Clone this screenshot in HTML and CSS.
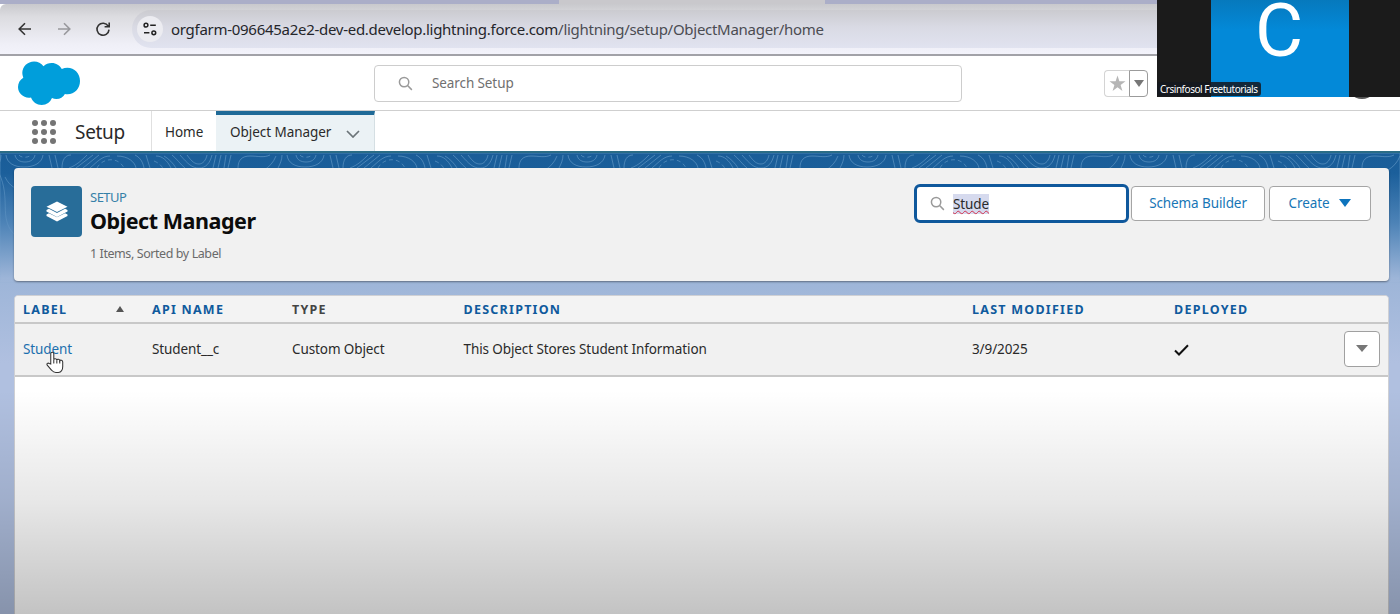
FILE: index.html
```
<!DOCTYPE html>
<html lang="en">
  <head>
    <meta charset="UTF-8" />
    <meta name="viewport" content="width=device-width, initial-scale=1.0" />
    <title>Object Manager | Salesforce</title>
    <link rel="stylesheet" href="styles.css">
  </head>
  <body>
    <!-- browser bar -->
    <div class="tabstrip"><div class="tab-active"></div></div>
    <div class="toolbar">
      <svg class="nav-icon" viewBox="0 0 16 16"><path d="M14 8H2.5M8 2.2 2.2 8 8 13.8" /></svg>
      <svg class="nav-icon off" viewBox="0 0 16 16"><path d="M2 8h11.5M8 2.2 13.8 8 8 13.8" /></svg>
      <svg class="nav-icon" viewBox="0 0 16 16"><path d="M13.2 5.2A6 6 0 1 0 14 8.6M14.2 1.4v4.4H9.6" /></svg>
      <div class="address">
        <span class="site-info">
          <svg viewBox="0 0 14 14"><circle cx="3" cy="3.2" r="1.9" /><path d="M7.2 3.2h5.6M1 10.8h5.4" /><circle cx="10.8" cy="10.8" r="1.9" /></svg>
        </span>
        <span class="url">orgfarm-096645a2e2-dev-ed.develop.lightning.force.com<span>/lightning/setup/ObjectManager/home</span></span>
      </div>
    </div>

    <!-- global header -->
    <header class="header">
      <svg class="logo" viewBox="0 0 64 44">
        <path d="M26.5 5.3A11.6 11.6 0 0 1 34.8 2c4.300 0 8 2.400 10 5.900a13.800 13.800 0 0 1 5.600-1.200C57.500 6.700 63 12.600 63 19.900S57.500 33.300 50.500 33.300c-.9 0-1.800-.1-2.600-.3a9.800 9.800 0 0 1-8.600 5.100c-1.600 0-3-.4-4.300-1A11.200 11.200 0 0 1 24.700 44c-4.900 0-9.100-3.100-10.700-7.500-.7.2-1.400.2-2.200.2C6 36.700 1 31.900 1 26c0-4 2.100-7.400 5.300-9.300A12.300 12.300 0 0 1 5.300 12C5.300 5.500 10.600.5 17.100.5c3.800 0 7.200 1.800 9.400 4.800z" />
      </svg>
      <div class="global-search">
        <svg class="glass" viewBox="0 0 16 16"><circle cx="6.500" cy="6.500" r="5" /><path d="m10.200 10.200 4.600 4.600" /></svg>
        <span>Search Setup</span>
      </div>
      <div class="favorites">
        <span class="star"><svg viewBox="0 0 18 18"><path d="m9 .5 2 6.200h6.500l-5.200 3.900 1.900 6.300L9 13.100l-5.200 3.800 1.900-6.300L.5 6.700H7z" /></svg></span>
        <span class="star-menu"><i class="caret"></i></span>
      </div>
      <div class="avatar"></div>
    </header>

    <nav class="context-bar">
      <svg class="waffle" viewBox="0 0 24 24">
        <circle cx="3" cy="3" r="3" /><circle cx="12" cy="3" r="3" /><circle cx="21" cy="3" r="3" />
        <circle cx="3" cy="12" r="3" /><circle cx="12" cy="12" r="3" /><circle cx="21" cy="12" r="3" />
        <circle cx="3" cy="21" r="3" /><circle cx="12" cy="21" r="3" /><circle cx="21" cy="21" r="3" />
      </svg>
      <span class="app-name">Setup</span>
      <a class="tab home">Home</a>
      <a class="tab active">
        Object Manager
        <svg viewBox="0 0 14 8"><path d="m1 1 6 6 6-6" /></svg>
      </a>
    </nav>

    <main class="page">
      <svg class="topo" width="1400" height="130">
        <defs>
          <pattern id="topo" width="281" height="130" patternUnits="userSpaceOnUse" x="-127">
            <path d="M2 3c6 0 11 4 15 12M10 3c5 3 9 7 12 12M18 2c5 4 8 9 13 13M26 2c8 9 12 13 19 13s11-5 13-13M33 2c5 7 8 9 12 9s7-4 8-9M62 2l-3 13M67 2l-3 13M72 2l-2 13M77 2l-3 13M84 15c0-8 4-12 12-12s14 2 20-1M90 22c14 0 27-6 32-19M124 15c2-4 4-8 4-13M133 2c1 8 8 12 18 12s18-4 19-12M142 2c1 5 5 7 10 7s9-2 10-7M176 2l3 13M182 2l3 13M189 15c0-8 3-13 9-13M196 15c8-3 13-8 18-13M203 15l17-13M210 15l16-13M217 15c7-6 12-12 20-12M244 3c11 0 18 6 19 12M262 2c6 3 8 8 9 13M273 2l4 13" />
            <path stroke-dasharray="4 3" d="M146 2c2 3 9 3 12 0M224 15c5-10 21-12 27 0M0 8c5 2 8 5 9 8" />
            <path d="M126 20c12 26 0 44 14 60s30-4 28 22M132 24c10 20 24 6 20 24s14 22 8 40M253 20c-18 16 4 26-8 44s-20 22-8 44M264 34c10-8 22 4 12 14s-20-6-12-14" />
          </pattern>
          <linearGradient id="fade" x2="0" y2="1"><stop offset="0" stop-color="#fff" /><stop offset="1" stop-color="#fff" stop-opacity="0" /></linearGradient>
          <mask id="m"><rect width="1400" height="130" fill="url(#fade)" /></mask>
        </defs>
        <rect width="1400" height="130" fill="url(#topo)" mask="url(#m)" />
      </svg>

      <section class="card page-header">
        <div class="page-icon">
          <svg viewBox="0 0 22 22"><path d="M11 .5 21.500 5.700 11 11 .5 5.700zM.5 9l2.400-1.200L11 11.900l8.100-4.100L21.500 9v1.600L11 15.900.5 10.600zM.5 13.400l2.400-1.200L11 16.300l8.100-4.100 2.400 1.200v1.500L11 20.500.5 14.900z" /></svg>
        </div>
        <div class="titles">
          <div class="eyebrow">SETUP</div>
          <h1>Object Manager</h1>
          <p>1 Items, Sorted by Label</p>
        </div>
        <div class="actions">
          <div class="quick-find">
            <svg class="glass" viewBox="0 0 16 16"><circle cx="6.500" cy="6.500" r="5" /><path d="m10.200 10.200 4.600 4.600" /></svg>
            <span>Stude</span>
          </div>
          <a class="btn schema">Schema Builder</a>
          <a class="btn create">Create <i class="caret"></i></a>
        </div>
      </section>

      <section class="card list">
        <div class="row head">
          <span class="sorted">LABEL <i class="up"></i></span>
          <span>API NAME</span>
          <span class="plain">TYPE</span>
          <span>DESCRIPTION</span>
          <span>LAST MODIFIED</span>
          <span>DEPLOYED</span>
        </div>
        <div class="row">
          <a class="link">Student
            <svg class="cursor" viewBox="0 0 20 24"><path d="M5 13.500V2.800C5 .6 8.200.6 8.200 2.800v6.400c0-1.500 3-1.500 3.200.3.300-1.300 2.900-1.100 3.100.7.500-1.100 3.100-.9 3.100 1.400v4.600c0 3.700-2 6-4.600 6.300h-2.600c-2 0-3.200-.8-4.400-2.300L1.300 14.800c-1-1.600.8-2.700 2.100-1.800z" /><path d="M8.200 9v4M11.400 9.500V13M14.500 10.200V13" /></svg>
          </a>
          <span class="api">Student__c</span>
          <span>Custom Object</span>
          <span>This Object Stores Student Information</span>
          <span>3/9/2025</span>
          <span><svg class="check" viewBox="0 0 15 12"><path d="m1 6.500 4 4L14 1.200" /></svg></span>
          <span class="row-menu"><i class="caret"></i></span>
        </div>
        <div class="watermark">CRS Info Solutions</div>
      </section>
    </main>

    <!-- meeting thumbnail -->
    <aside class="call">
      <div class="face">C</div>
      <div class="name">Crsinfosol Freetutorials</div>
    </aside>
    <div class="shade"></div>
  </body>
</html>
```
FILE: styles.css
```
* {
  box-sizing: border-box;
}
body {
  margin: 0;
  height: 614px;
  overflow: hidden;
  position: relative;
  display: flex;
  flex-direction: column;
  font-family: "Noto Sans", "Open Sans", sans-serif;
  font-size: 13.5px;
  letter-spacing: -0.1px;
  color: #2a2a2a;
  background-color: white;
}
svg {
  display: block;
  fill: none;
}
.tabstrip,
.toolbar,
.header,
.context-bar {
  flex-shrink: 0;
}
.tabstrip {
  height: 4px;
  background-color: #abaec8;
}
.tab-active {
  width: 266px;
  height: 4px;
  margin-left: 559px;
  background-color: #c9c8cc;
}
.toolbar {
  height: 52px;
  display: flex;
  align-items: center;
  padding-left: 17px;
  border-bottom: 2px solid #a2a2a8;
  border-top-left-radius: 6px;
  background: linear-gradient(#c9c9cd, #dcdce0 25%, #efeff7 80%, #f3f3fb);
}
.nav-icon {
  width: 16px;
  height: 16px;
  margin-right: 23px;
  stroke: #333;
  stroke-width: 1.6;
}
.nav-icon.off {
  stroke: #98989c;
}
.address {
  flex: 1;
  height: 38px;
  margin-left: -2px;
  border-radius: 19px 0 0 19px;
  display: flex;
  align-items: center;
  padding-left: 5px;
  background: linear-gradient(#cbcbd0, #d9dae4 45%, #e1e3f0);
}
.site-info {
  width: 26px;
  height: 26px;
  border-radius: 50%;
  background-color: #ececf1;
  display: flex;
  align-items: center;
  justify-content: center;
}
.site-info svg {
  width: 14px;
  height: 14px;
  stroke: #222;
  stroke-width: 1.5;
}
.url {
  margin-left: 8px;
  font-size: 15px;
  letter-spacing: -0.28px;
  color: #25262b;
}
.url span {
  color: #4b4c52;
}

.header {
  height: 55px;
  position: relative;
  display: flex;
  align-items: center;
  border-bottom: 1px solid #cfcfcf;
}
.logo {
  width: 64px;
  height: 44px;
  margin-left: 17px;
  fill: #009edb;
}
.glass {
  width: 15px;
  height: 15px;
  stroke: #9a9a9a;
  stroke-width: 1.6;
}
.global-search {
  width: 588px;
  height: 37px;
  margin-left: 293px;
  padding-left: 23px;
  display: flex;
  align-items: center;
  gap: 19px;
  border: 1px solid #cdcdcd;
  border-radius: 4px;
  color: #707070;
}
.favorites {
  display: flex;
  margin-left: 142px;
  height: 27px;
}
.star,
.star-menu {
  display: flex;
  align-items: center;
  justify-content: center;
  border: 1px solid #d4d4d4;
}
.star {
  width: 25px;
  border-right: 0;
  border-radius: 4px 0 0 4px;
}
.star svg {
  width: 17px;
  height: 17px;
  fill: #b6b6b6;
}
.star-menu {
  width: 19px;
  border-color: #9b9b9b;
  border-radius: 0 4px 4px 0;
}
.caret {
  border: 5px solid transparent;
  border-top: 7px solid #777;
  border-bottom: 0;
}
.avatar {
  position: absolute;
  left: 1346px;
  top: 11px;
  width: 32px;
  height: 32px;
  border-radius: 50%;
  background-color: #555;
}

.context-bar {
  height: 40px;
  display: flex;
  align-items: stretch;
}
.waffle {
  width: 24px;
  height: 24px;
  margin: 9px 0 0 32px;
  fill: #747474;
}
.app-name {
  width: 77px;
  margin-left: 19px;
  font-size: 19px;
  line-height: 42px;
  letter-spacing: -0.3px;
  border-right: 1px solid #e0e0e0;
}
.tab {
  line-height: 42px;
  letter-spacing: -0.05px;
}
.tab.home {
  width: 64px;
  padding-left: 13px;
}
.tab.active {
  width: 159px;
  padding-left: 14px;
  line-height: 33px;
  display: flex;
  align-items: center;
  gap: 15px;
  padding-bottom: 2px;
  border-top: 4px solid #1f6a97;
  border-right: 1px solid #d5dfe3;
  background-color: #ebf2f5;
}
.tab svg {
  width: 14px;
  height: 8px;
  margin-top: 3px;
  stroke: #6b7478;
  stroke-width: 1.7;
}

.page {
  flex: 1;
  min-height: 0;
  position: relative;
  padding: 16px 11px 0 14px;
  border-top: 2px solid #2a6c86;
  background: linear-gradient(#1a5d98, #1b5f9b 20px, #4d83b7 70px, #9db5d8 125px, #b0c0e0 210px);
}
.topo {
  position: absolute;
  left: 0;
  top: 0;
  stroke: #7fb0d8;
  stroke-opacity: 0.5;
}
.card {
  position: relative;
  border-radius: 4px;
  background-color: #f1f1f1;
}
.page-header {
  height: 113px;
  margin-top: -1px;
  padding: 18px 18px 0 17px;
  display: flex;
  box-shadow: 0 1px 2px rgba(0, 0, 0, 0.4);
}
.page-icon {
  width: 51px;
  height: 51px;
  border-radius: 4px;
  background-color: #286d99;
  display: flex;
  align-items: center;
  justify-content: center;
}
.page-icon svg {
  width: 22px;
  height: 22px;
  fill: white;
}
.titles {
  margin-left: 8px;
  flex: 1;
}
.eyebrow {
  font-size: 13px;
  line-height: 16px;
  margin-top: 3px;
  letter-spacing: -0.5px;
  color: #3580a8;
}
h1 {
  margin: 0;
  font-size: 21.500px;
  line-height: 32px;
  letter-spacing: -0.45px;
  color: #0c0c0c;
}
.titles p {
  margin: 8px 0 0;
  font-size: 12.500px;
  line-height: 18px;
  letter-spacing: -0.42px;
  color: #6a6a6a;
}
.actions {
  display: flex;
  align-items: flex-start;
}
.quick-find {
  width: 215px;
  height: 39px;
  margin: -2px 2px 0 0;
  padding-left: 13px;
  display: flex;
  align-items: center;
  gap: 8px;
  border: 3px solid #0f589c;
  border-radius: 6px;
  background-color: white;
}
.quick-find span {
  line-height: 20px;
  background-color: #d6daee;
  text-decoration: underline wavy #d2304c 1px;
  text-decoration-skip-ink: none;
  text-underline-offset: 1px;
}
.btn {
  height: 35px;
  padding-bottom: 1px;
  display: flex;
  align-items: center;
  justify-content: center;
  border: 1px solid #a5a5a5;
  border-radius: 4px;
  background-color: white;
  color: #1776b6;
}
.schema {
  width: 134px;
  margin-right: 4px;
}
.create {
  width: 102px;
  gap: 10px;
}
.create .caret {
  border-width: 8px 6px 0;
  border-top-color: #0d74bd;
}

.list {
  height: 330px;
  margin-top: 14px;
  border: 1px solid #cfd0d4;
  background-color: white;
}
.row {
  display: grid;
  grid-template-columns: 129px 140px 171.500px 508.500px 202px 170px 36px;
  align-items: center;
  height: 53px;
  padding: 0 0 2px 8px;
  border-bottom: 2px solid #c8c8c8;
  background-color: #f1f1f1;
}
.row.head {
  height: 28px;
  padding-bottom: 0;
  border-radius: 4px 4px 0 0;
  background-color: #f3f3f3;
  font-size: 12.500px;
  font-weight: 700;
  letter-spacing: 1.25px;
  color: #0f5a9d;
}
.head .plain {
  color: #444;
}
.sorted {
  display: flex;
  align-items: center;
  justify-content: space-between;
  padding-right: 28px;
}
.up {
  border: 4px solid transparent;
  border-bottom: 6px solid #555;
  border-top: 0;
}
.link {
  position: relative;
  color: #1c6fae;
}
.cursor {
  position: absolute;
  left: 23px;
  top: 11px;
  width: 19px;
  height: 23px;
  fill: white;
  stroke: #333;
  stroke-width: 1.1;
}
.check {
  width: 15px;
  height: 12px;
  margin-top: 3px;
  stroke: #111;
  stroke-width: 2;
}
.row-menu {
  height: 36px;
  display: flex;
  align-items: center;
  justify-content: center;
  border: 1px solid #a0a0a0;
  border-radius: 4px;
  background-color: white;
}
.row-menu .caret {
  border-width: 7px 6px 0;
}
.watermark {
  position: absolute;
  left: 860px;
  top: 223px;
  font-size: 46px;
  line-height: 60px;
  font-weight: 700;
  letter-spacing: -0.5px;
  color: rgba(0, 0, 0, 0.02);
}

.call {
  position: absolute;
  left: 1157px;
  top: 0;
  width: 243px;
  height: 97px;
  background-color: #1b1b1b;
}
.face {
  width: 138px;
  height: 97px;
  margin-left: 54px;
  font-family: "Roboto", sans-serif;
  font-size: 74px;
  line-height: 62px;
  text-align: center;
  text-indent: -2px;
  color: white;
  background: linear-gradient(#0679bd, #0389d8 30px);
}
.name {
  position: absolute;
  left: 0;
  bottom: 1px;
  padding: 0 3px;
  border-radius: 3px;
  font-size: 10px;
  line-height: 14px;
  letter-spacing: -0.48px;
  color: white;
  background-color: rgba(20, 24, 30, 0.85);
}
.shade {
  position: absolute;
  left: 0;
  right: 0;
  bottom: 0;
  height: 224px;
  background: linear-gradient(rgba(0, 0, 0, 0), rgba(0, 0, 0, 0.095) 50%, rgba(0, 0, 0, 0.235));
  pointer-events: none;
}
```
